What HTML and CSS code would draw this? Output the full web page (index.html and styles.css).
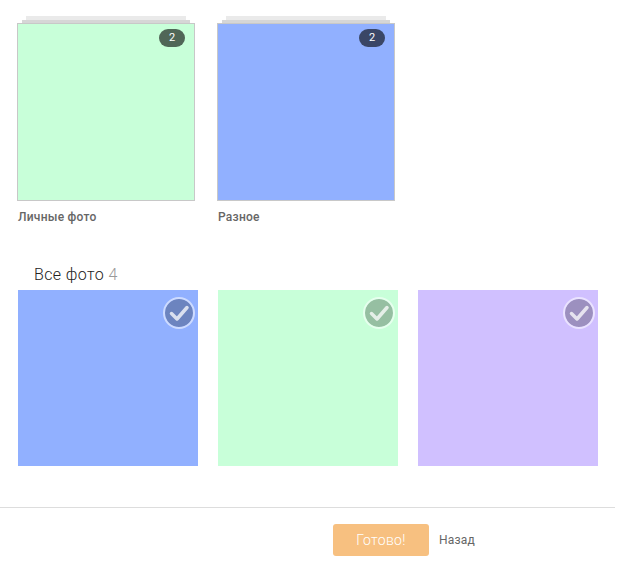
FILE: index.html
```html
<!DOCTYPE html>
<html lang="en">
<head>
  <meta charset="UTF-8">
  <meta name="viewport" content="width=device-width, initial-scale=1.0">
  <title>Выбор фото</title>
  <link rel="stylesheet" href="styles.css">
</head>
<body>
  <div class="wrap">
    <!-- Albums -->
    <div class="albums">
      <div class="album">
        <div class="strip-back"></div>
        <div class="strip-mid"></div>
        <div class="cover green">
          <span class="badge">2</span>
        </div>
        <div class="album-name">Личные фото</div>
      </div>
      <div class="album">
        <div class="strip-back"></div>
        <div class="strip-mid"></div>
        <div class="cover blue">
          <span class="badge">2</span>
        </div>
        <div class="album-name">Разное</div>
      </div>
    </div>

    <!-- All photos -->
    <h2 class="title">Все фото <span class="count">4</span></h2>
    <div class="photos">
      <div class="photo blue">
        <span class="check">
          <svg width="22" height="22" viewBox="0 0 22 22"><path d="M3.5 11.5 L9 17 L19 5.5" /></svg>
        </span>
      </div>
      <div class="photo green">
        <span class="check">
          <svg width="22" height="22" viewBox="0 0 22 22"><path d="M3.5 11.5 L9 17 L19 5.5" /></svg>
        </span>
      </div>
      <div class="photo purple">
        <span class="check">
          <svg width="22" height="22" viewBox="0 0 22 22"><path d="M3.5 11.5 L9 17 L19 5.5" /></svg>
        </span>
      </div>
    </div>

    <div class="footer">
      <button class="button">Готово!</button>
      <a class="back">Назад</a>
    </div>
  </div>
</body>
</html>
```

FILE: styles.css
```css
html, body {
  overflow: hidden;
}
body {
  font-family: Roboto, Arial, sans-serif;
  margin: 0;
  padding: 0;
  background-color: #fff;
}
.wrap {
  width: 615px;
}
.green {
  background-color: #c8ffd9;
}
.blue {
  background-color: #91b0ff;
}
.purple {
  background-color: #d0c0ff;
}
.albums {
  display: flex;
  gap: 22px;
  padding: 16px 0 0 17px;
}
.album {
  width: 178px;
}
.strip-back {
  height: 4px;
  margin: 0 9px;
  background-color: #eaeaea;
}
.strip-mid {
  height: 3px;
  margin: 0 5px;
  background-color: #d6d6d6;
}
.cover {
  position: relative;
  box-sizing: border-box;
  height: 178px;
  border: 1px solid #c8c8c8;
}
.badge {
  position: absolute;
  top: 5px;
  right: 9px;
  width: 26px;
  height: 18px;
  border-radius: 9px;
  background-color: rgba(0, 0, 0, 0.6);
  color: #fff;
  font-size: 11px;
  line-height: 18px;
  text-align: center;
}
.album-name {
  margin: 9px 0 0 1px;
  font-size: 12px;
  font-weight: 500;
  line-height: 14px;
  letter-spacing: 0.25px;
  color: #666;
}
.title {
  margin: 41px 0 0 34px;
  font-size: 16px;
  font-weight: 300;
  line-height: 19px;
  letter-spacing: 0.4px;
  color: #222;
}
.count {
  color: #999;
}
.photos {
  display: flex;
  gap: 20px;
  margin: 6px 0 0 18px;
}
.photo {
  position: relative;
  flex: none;
  width: 180px;
  height: 176px;
}
.check {
  position: absolute;
  top: 7px;
  right: 3px;
  display: flex;
  align-items: center;
  justify-content: center;
  box-sizing: border-box;
  width: 32px;
  height: 32px;
  border: 2px solid rgba(255, 255, 255, 0.55);
  border-radius: 50%;
  background-color: rgba(0, 0, 0, 0.25);
  background-clip: padding-box;
}
.check path {
  fill: none;
  stroke: rgba(255, 255, 255, 0.75);
  stroke-width: 3.5;
  stroke-linecap: round;
  stroke-linejoin: round;
}
.footer {
  display: flex;
  align-items: center;
  gap: 10px;
  margin-top: 41px;
  padding: 16px 0 0 333px;
  border-top: 1px solid #ddd;
}
.button {
  width: 96px;
  height: 32px;
  padding: 0;
  border: none;
  border-radius: 3px;
  background-color: #f7c080;
  color: #fff;
  font-family: Roboto, Arial, sans-serif;
  font-size: 14px;
  font-weight: 300;
  letter-spacing: 0.3px;
}
.back {
  font-size: 12px;
  letter-spacing: 0.2px;
  color: #666;
}
```
